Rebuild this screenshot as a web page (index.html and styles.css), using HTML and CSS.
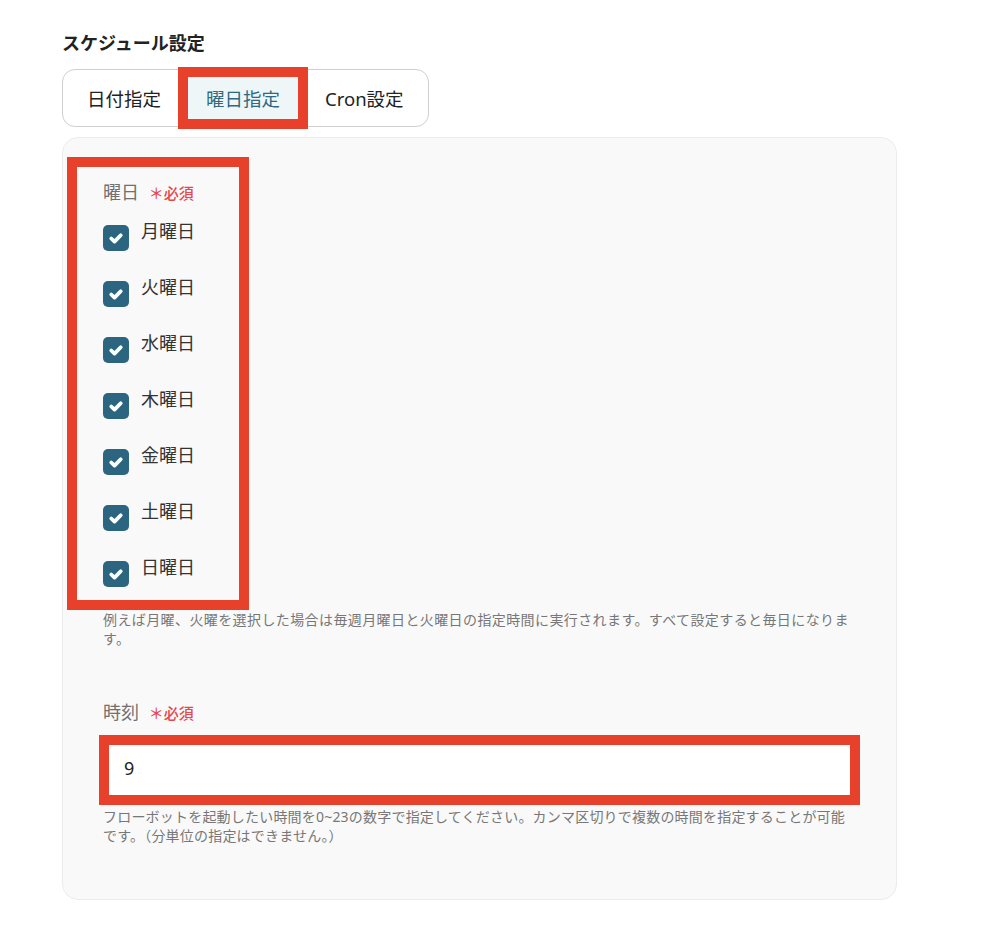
FILE: index.html
```html
<!DOCTYPE html>
<html lang="ja">
<head>
    <meta charset="UTF-8">
    <meta name="viewport" content="width=device-width, initial-scale=1.0">
    <title>スケジュール設定</title>
    <link rel="stylesheet" href="styles.css">
</head>
<body>
    <div class="schedule">
        <h2 class="title">スケジュール設定</h2>
        <div class="tabs">
            <button class="tab">日付指定</button>
            <button class="tab active mark">曜日指定</button>
            <button class="tab">Cron設定</button>
        </div>
        <div class="panel">
            <div class="days mark-box">
                <div class="field-label">曜日 <span class="required">＊必須</span></div>
                <div class="options">
                    <label class="option"><span class="box"><svg viewBox="0 0 16 16"><path d="M4.2 8.4l2.6 2.5L11.8 5.8"/></svg></span><span class="option-text">月曜日</span></label>
                    <label class="option"><span class="box"><svg viewBox="0 0 16 16"><path d="M4.2 8.4l2.6 2.5L11.8 5.8"/></svg></span><span class="option-text">火曜日</span></label>
                    <label class="option"><span class="box"><svg viewBox="0 0 16 16"><path d="M4.2 8.4l2.6 2.5L11.8 5.8"/></svg></span><span class="option-text">水曜日</span></label>
                    <label class="option"><span class="box"><svg viewBox="0 0 16 16"><path d="M4.2 8.4l2.6 2.5L11.8 5.8"/></svg></span><span class="option-text">木曜日</span></label>
                    <label class="option"><span class="box"><svg viewBox="0 0 16 16"><path d="M4.2 8.4l2.6 2.5L11.8 5.8"/></svg></span><span class="option-text">金曜日</span></label>
                    <label class="option"><span class="box"><svg viewBox="0 0 16 16"><path d="M4.2 8.4l2.6 2.5L11.8 5.8"/></svg></span><span class="option-text">土曜日</span></label>
                    <label class="option"><span class="box"><svg viewBox="0 0 16 16"><path d="M4.2 8.4l2.6 2.5L11.8 5.8"/></svg></span><span class="option-text">日曜日</span></label>
                </div>
            </div>
            <p class="help help-days">例えば月曜、火曜を選択した場合は毎週月曜日と火曜日の指定時間に実行されます。すべて設定すると毎日になります。</p>

            <div class="time-field">
                <div class="field-label">時刻 <span class="required">＊必須</span></div>
                <div class="input-wrap mark">
                    <textarea class="time-input">9</textarea>
                </div>
                <p class="help help-time">フローボットを起動したい時間を0~23の数字で指定してください。カンマ区切りで複数の時間を指定することが可能です。（分単位の指定はできません。）</p>
            </div>
        </div>
    </div>
</body>
</html>
```

FILE: styles.css
```css
body {
    margin: 0;
    padding: 31px 0 0 62px;
    font-family: "Noto Sans", "Noto Sans CJK JP", sans-serif;
    color: #222;
    background: #fff;
}
.schedule {
    width: 835px;
}
.title {
    margin: 0;
    font-size: 18px;
    line-height: 24px;
    font-weight: 600;
}
.tabs {
    display: inline-flex;
    gap: 5px;
    margin-top: 14px;
    padding: 5px 4px;
    border: 1px solid #cfcfcf;
    border-radius: 13px;
    background: #fff;
}
.tab {
    height: 46px;
    padding: 0 20px;
    font-family: inherit;
    font-size: 18.5px;
    color: #222;
    background: none;
    border: none;
    border-radius: 8px;
    cursor: pointer;
}
.tab.active {
    background: #eef6f7;
    color: #2e6a80;
}
/* red annotation frames */
.mark {
    position: relative;
}
.mark::after {
    content: "";
    position: absolute;
    inset: -8px;
    border: 10px solid #e8412b;
    pointer-events: none;
}
.mark-box {
    border: 10px solid #e8412b;
}
.panel {
    margin-top: 10px;
    padding: 19px 40px 54px;
    background: #f9f9f9;
    border: 1px solid #ececec;
    border-radius: 16px;
}
.days {
    width: 182px;
    box-sizing: border-box;
    margin-left: -36px;
    padding: 13px 0 13px 26px;
}
.field-label {
    font-size: 18px;
    line-height: 24px;
    color: #707070;
}
.required {
    margin-left: 5px;
    font-size: 15px;
    font-weight: 500;
    color: #e5484d;
}
.options {
    display: flex;
    flex-direction: column;
    gap: 30px;
    margin-top: 20px;
}
.option {
    display: flex;
    align-items: flex-start;
    gap: 12px;
    font-size: 18px;
    line-height: 18px;
    color: #333;
}
.option-text {
    margin-top: -3px;
}
.box {
    display: flex;
    align-items: center;
    justify-content: center;
    width: 26px;
    height: 26px;
    border-radius: 5px;
    background: #2c6580;
}
.box svg {
    width: 20px;
    height: 20px;
    fill: none;
    stroke: #fff;
    stroke-width: 3;
    stroke-linecap: round;
    stroke-linejoin: round;
}
.help {
    margin: 0;
    line-height: 19px;
    color: #777;
}
.help-days {
    font-size: 14px;
    letter-spacing: 0.4px;
}
.help-time {
    margin-top: 5px;
    font-size: 14px;
    letter-spacing: 0.2px;
}
.time-field {
    margin-top: 52px;
}
.input-wrap {
    margin-top: 13px;
}
.input-wrap::after {
    inset: -3px -4px;
}
.time-input {
    display: block;
    width: 100%;
    height: 64px;
    box-sizing: border-box;
    padding: 18px 20px;
    font-family: inherit;
    font-size: 18px;
    line-height: 22px;
    color: #222;
    background: #fff;
    border: 1px solid #ddd;
    border-radius: 4px;
    resize: vertical;
}
```
